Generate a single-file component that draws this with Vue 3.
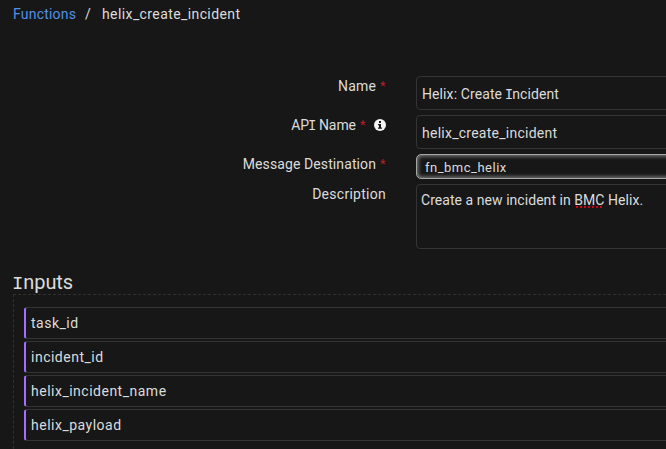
<script setup>
const inputs = [
  { name: 'task_id' },
  { name: 'incident_id' },
  { name: 'helix_incident_name' },
  { name: 'helix_payload' },
]
</script>

<template>
  <main class="page">
    <nav class="crumbs">
      <a class="link">Functions</a><span class="slash">/</span><span class="current">helix_create_incident</span>
    </nav>

    <form class="form">
      <div class="row">
        <label class="label"><span class="t-name">Name</span><span class="star">*</span></label>
        <div class="field text"><span class="v-name">Helix: Create <i class="slab">I</i>ncident</span></div>
      </div>
      <div class="row">
        <label class="label">
          <span class="t-api">AP<i class="slab">I</i> Name</span><span class="star">*</span>
          <svg class="info" viewBox="0 0 12 12" width="12" height="12">
            <circle cx="6" cy="6" r="6" fill="#f4f4f4" />
            <path d="M5 2h2v2H5zM4 5H7v3.4h1v1.4H4V8.4H5V6.3H4z" fill="#171717" />
          </svg>
        </label>
        <div class="field text"><span class="v-api">helix_create_incident</span></div>
      </div>
      <div class="row">
        <label class="label"><span class="t-dest">Message Destination</span><span class="star">*</span></label>
        <div class="field select"><span class="v-dest">fn_bmc_helix</span></div>
      </div>
      <div class="row">
        <label class="label"><span class="t-desc">Description</span></label>
        <div class="field area"><span class="v-desc">Create a new incident in <span class="typo">BMC</span> Helix.</span></div>
      </div>
    </form>

    <h2 class="heading"><i class="slab">I</i>nputs</h2>
    <section class="drop">
      <div v-for="item in inputs" :key="item.name" class="item">{{ item.name }}</div>
    </section>
  </main>
</template>

<style>
body {
  background: #171717;
  overflow: hidden;
}
</style>

<style scoped>
.page {
  box-sizing: border-box;
  width: 666px;
  height: 449px;
  overflow: hidden;
  background: #171717;
  color: #dcdcdc;
  font: 14px/18px Roboto, "Liberation Sans", sans-serif;
  letter-spacing: 0.3px;
  white-space: nowrap;
}
.crumbs {
  display: flex;
  height: 76px;
  box-sizing: border-box;
  padding: 5px 0 0 13px;
}
.link {
  width: 72px;
  color: #5590e6;
  letter-spacing: 0.2px;
}
.slash {
  width: 17px;
}
.current {
  letter-spacing: 0.4px;
}
.form {
  display: flex;
  flex-direction: column;
  gap: 5px;
}
.row {
  display: flex;
}
.label {
  display: flex;
  flex: none;
  align-items: center;
  justify-content: flex-end;
  width: 386px;
  height: 20px;
  margin-right: 30px;
}
.star {
  width: 6px;
  margin-left: 4px;
  color: #b81d26;
  font-size: 13px;
  letter-spacing: 0;
}
.info {
  margin-left: 8px;
}
.slab {
  font-family: "Liberation Mono", monospace;
  font-style: normal;
  line-height: 1;
  margin: 0 -1px;
}
.t-name {
  letter-spacing: 0.15px;
}
.t-api {
  letter-spacing: -0.05px;
}
.t-dest {
  letter-spacing: 0.1px;
}
.t-desc {
  letter-spacing: 0.27px;
}
.v-name {
  letter-spacing: 0.1px;
}
.v-api {
  letter-spacing: 0.25px;
}
.v-dest {
  letter-spacing: 0.5px;
}
.v-desc {
  letter-spacing: 0.05px;
}
.field {
  box-sizing: border-box;
  flex: none;
  width: 260px;
  border: 1px solid #343434;
  border-radius: 4px;
}
.text {
  height: 34px;
  padding: 8px 0 0 5px;
}
.select {
  height: 25px;
  padding: 4px 0 0 8px;
  border: 1px solid #a4a8a4;
  border-radius: 5px;
  box-shadow: inset 0 0 4px 1px #8a8a8a;
  font-size: 13px;
}
.area {
  height: 65px;
  padding: 6px 0 0 4px;
}
.typo {
  background: repeating-linear-gradient(90deg, #d60012 0 2px, transparent 2px 4px) 2px 100% / 26px 2px no-repeat;
}
.heading {
  height: 45px;
  box-sizing: border-box;
  margin: 0;
  padding: 21px 0 0 13px;
  font-size: 20px;
  font-weight: 400;
  line-height: 24px;
  letter-spacing: -0.1px;
}
.heading .slab {
  margin: 0 0 0 -1px;
  font-size: 19px;
}
.drop {
  display: flex;
  flex-direction: column;
  gap: 2px;
  box-sizing: border-box;
  height: 170px;
  margin-left: 13px;
  padding: 12px 0 0 10px;
  border: 1px dashed #303030;
  border-right: 0;
  border-bottom: 0;
}
.item {
  box-sizing: border-box;
  height: 32px;
  padding: 6px 0 0 5px;
  border: 1px solid #343434;
  border-left: 2px solid #a56eff;
  border-right: 0;
  border-radius: 3px 0 0 3px;
  letter-spacing: 0.5px;
}
</style>
